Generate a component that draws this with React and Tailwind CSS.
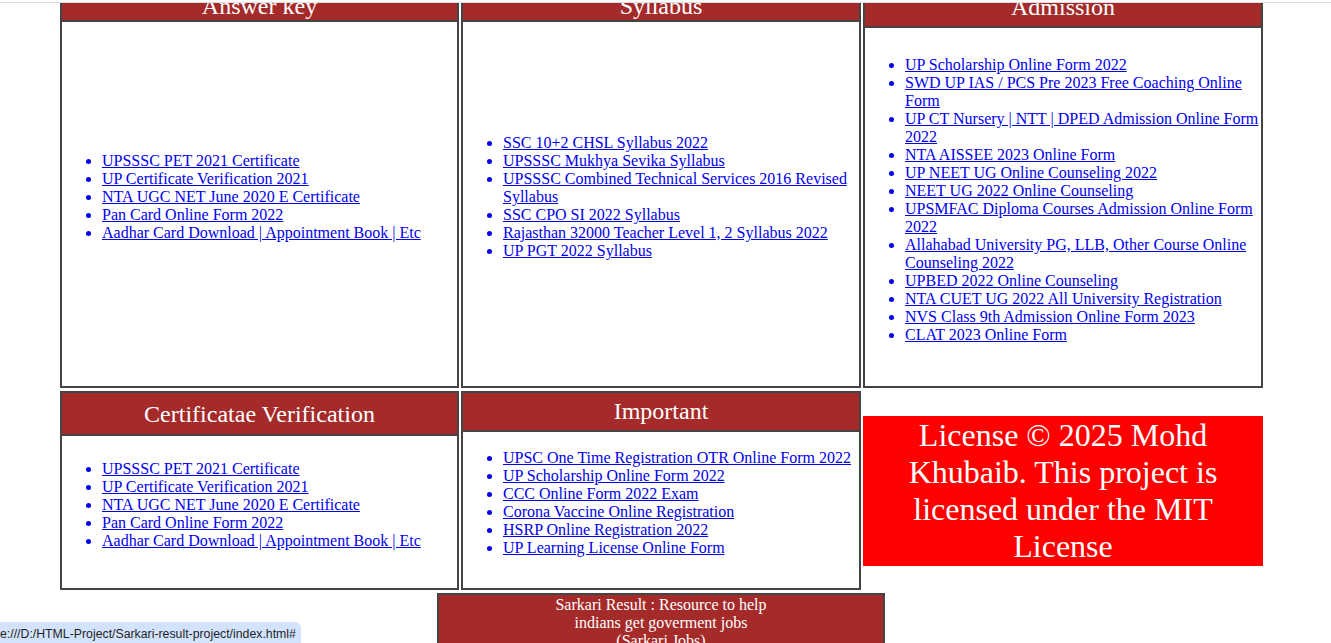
import React from 'react';

const answerKey = [
  'UPSSSC PET 2021 Certificate',
  'UP Certificate Verification 2021',
  'NTA UGC NET June 2020 E Certificate',
  'Pan Card Online Form 2022',
  'Aadhar Card Download | Appointment Book | Etc',
];

const syllabus = [
  'SSC 10+2 CHSL Syllabus 2022',
  'UPSSSC Mukhya Sevika Syllabus',
  'UPSSSC Combined Technical Services 2016 Revised Syllabus',
  'SSC CPO SI 2022 Syllabus',
  'Rajasthan 32000 Teacher Level 1, 2 Syllabus 2022',
  'UP PGT 2022 Syllabus',
];

const admission = [
  'UP Scholarship Online Form 2022',
  'SWD UP IAS / PCS Pre 2023 Free Coaching Online Form',
  'UP CT Nursery | NTT | DPED Admission Online Form 2022',
  'NTA AISSEE 2023 Online Form',
  'UP NEET UG Online Counseling 2022',
  'NEET UG 2022 Online Counseling',
  'UPSMFAC Diploma Courses Admission Online Form 2022',
  'Allahabad University PG, LLB, Other Course Online Counseling 2022',
  'UPBED 2022 Online Counseling',
  'NTA CUET UG 2022 All University Registration',
  'NVS Class 9th Admission Online Form 2023',
  'CLAT 2023 Online Form',
];

const important = [
  'UPSC One Time Registration OTR Online Form 2022',
  'UP Scholarship Online Form 2022',
  'CCC Online Form 2022 Exam',
  'Corona Vaccine Online Registration',
  'HSRP Online Registration 2022',
  'UP Learning License Online Form',
];

const LinkList = ({ items }) => (
  <ul className="list-disc pl-[40px] pb-[14px] text-[#0000ee]">
    {items.map((item) => (
      <li key={item}>
        <a href="#" className="underline text-[#0000ee]">{item}</a>
      </li>
    ))}
  </ul>
);

// header paddings differ from box to box in the original page
const Box = ({ title, items, headClass, width }) => (
  <div className={`${width} flex flex-col border-2 border-[#444]`}>
    <div className={`${headClass} bg-[#a52a2a] text-white text-center text-[24px] leading-[27px] border-b-2 border-[#444]`}>
      {title}
    </div>
    <div className="flex-1 flex flex-col justify-center">
      <LinkList items={items} />
    </div>
  </div>
);

const App = () => {
  return (
    <div className="relative h-[643px] overflow-hidden bg-white flex flex-col font-['Liberation_Serif','Times_New_Roman',serif] text-[16px] leading-[18px]">
      <div className="h-[3px] shrink-0 border-b border-[#dadce0]" />

      <div className="flex-1 overflow-hidden">
        <div className="mt-[-24px]">
          {/* row 1 */}
          <div className="flex h-[409px] pl-[60px] gap-[2px]">
            <Box title="Answer key" items={answerKey} headClass="pt-[12px]" width="w-[399px]" />
            <Box title="Syllabus" items={syllabus} headClass="pt-[12px]" width="w-[400px]" />
            <Box title="Admission" items={admission} headClass="pt-[13px] pb-[5px]" width="w-[400px]" />
          </div>

          {/* row 2 */}
          <div className="flex h-[199px] mt-[3px] pl-[60px] gap-[2px]">
            <Box title="Certificatae Verification" items={answerKey} headClass="pt-[8px] pb-[6px]" width="w-[399px]" />
            <Box title="Important" items={important} headClass="pt-[5px] pb-[5px]" width="w-[400px]" />
            <div className="w-[400px] flex items-center">
              <div className="w-full h-[150px] pt-[1px] bg-[#ff0000] text-white text-center text-[32px] leading-[37px]">
                License © 2025 Mohd<br />
                Khubaib. This project is<br />
                licensed under the MIT<br />
                License
              </div>
            </div>
          </div>

          {/* footer */}
          <div className="mt-[3px] ml-[437px] w-[448px] border-2 border-[#444] bg-[#a52a2a] text-white text-center pt-[1px] pb-[8px]">
            Sarkari Result : Resource to help<br />
            indians get goverment jobs<br />
            (Sarkari Jobs)
          </div>
        </div>
      </div>

      {/* browser status bubble */}
      <div className="absolute left-0 bottom-0 h-[21px] w-[301px] pt-[2px] overflow-hidden whitespace-nowrap bg-[#d3e3fd] rounded-tr-[6px] flex items-center font-['Liberation_Sans',Arial,sans-serif] text-[12.3px] leading-[16px] text-[#1f1f1f]">
        e:///D:/HTML-Project/Sarkari-result-project/index.html#
      </div>
    </div>
  );
};

export default App;
